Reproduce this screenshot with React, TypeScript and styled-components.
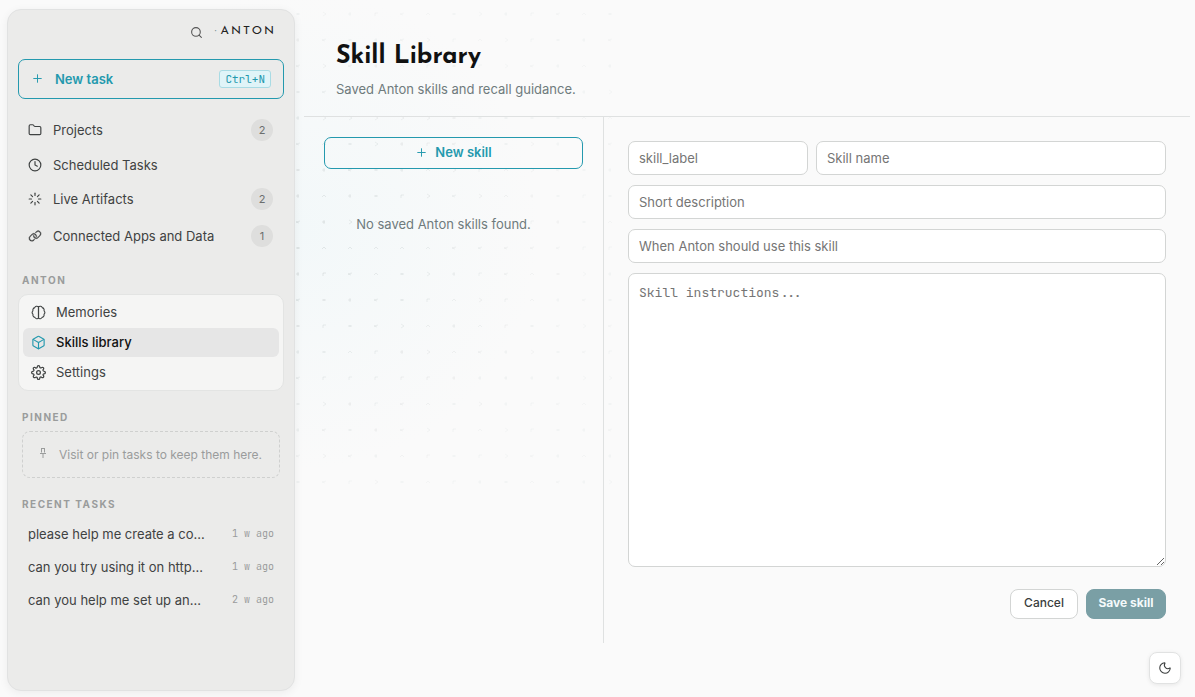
import React from "react";
import styled, { createGlobalStyle, css } from "styled-components";
import { Box, Clock, Folder, Loader, Moon, Plus, Search } from "lucide-react";
import { FiSettings } from "react-icons/fi";
import { PiLink } from "react-icons/pi";

const teal = "#2499ae";
const line = "#dfe1e1";
const sans = `Inter, "Liberation Sans", sans-serif`;
const mono = `"JetBrains Mono", "DejaVu Sans Mono", "Liberation Mono", monospace`;
const display = `"Josefin Sans", Lato, "Liberation Sans", sans-serif`;

const GlobalStyle = createGlobalStyle`
  *, *::before, *::after { box-sizing: border-box; }
  body {
    margin: 0;
    background: #fafafa;
    color: #3a3d3d;
    font-family: ${sans};
    font-size: 13px;
    line-height: 20px;
  }
  button, input, textarea { font: inherit; color: inherit; }
  button { cursor: pointer; }
`;

const Shell = styled.div`
  position: relative;
  display: grid;
  grid-template-columns: 288px minmax(0, 1fr);
  column-gap: 9px;
  min-height: 100vh;
  padding: 0 5px 0 7px;
  background:
    radial-gradient(circle at 300px 230px, rgba(238, 247, 249, 0.6), rgba(250, 250, 250, 0) 240px),
    #fafafa;
`;

const Field = styled.svg`
  position: absolute;
  top: 0;
  left: 0;
  pointer-events: none;
  fill: none;
  stroke: #a3adad;
`;

const Sidebar = styled.aside`
  position: relative;
  display: flex;
  flex-direction: column;
  margin: 9px 0 6px;
  padding: 0 10px;
  border: 1px solid #e1e2e2;
  border-radius: 14px;
  background: #ebebea;
  box-shadow: 0 2px 10px rgba(0, 0, 0, 0.06);
`;

const Brand = styled.div`
  display: flex;
  align-items: center;
  justify-content: flex-end;
  gap: 12px;
  height: 49px;
  padding: 0 8px 8px 0;
`;

const IconButton = styled.button`
  display: grid;
  place-items: center;
  padding: 4px 0 0;
  border: 0;
  background: none;
  color: #555;
`;

const Wordmark = styled.span`
  display: flex;
  gap: 4px;
  font: 400 12px/16px ${display};
  letter-spacing: 2px;
  color: #222;
`;

const Dot = styled.span`
  letter-spacing: 0;
  color: #6f8a90;
`;

const outline = css`
  border: 1px solid ${teal};
  border-radius: 7px;
  background: transparent;
  color: ${teal};
  font-weight: 600;
`;

const NewTask = styled.button`
  ${outline}
  display: flex;
  align-items: center;
  gap: 11px;
  height: 40px;
  padding: 0 12px 1px;
`;

const Kbd = styled.kbd`
  margin-left: auto;
  padding: 0 5px;
  border: 1px solid #a9dbe4;
  border-radius: 3px;
  background: #e0f4f8;
  font: 400 11px/16px ${mono};
`;

const Nav = styled.nav`
  display: flex;
  flex-direction: column;
  gap: 1px;
  margin-top: 13px;
`;

const NavItem = styled.a<{ $tall?: boolean }>`
  display: flex;
  align-items: center;
  gap: 11px;
  height: ${(p) => (p.$tall ? 36 : 31)}px;
  padding: 0 11px 0 10px;
  color: #3f4242;
  text-decoration: none;
`;

const Count = styled.span`
  min-width: 22px;
  height: 22px;
  margin-left: auto;
  border-radius: 11px;
  background: #dededd;
  color: #6b6e6e;
  font-size: 11px;
  line-height: 22px;
  text-align: center;
`;

const SectionTitle = styled.h2`
  margin: 0;
  padding: 0 4px;
  color: #9a9c9c;
  font-size: 10px;
  font-weight: 700;
  line-height: 14px;
  letter-spacing: 1.5px;
`;

const Section = styled.section`
  display: flex;
  flex-direction: column;
  gap: 7px;
  margin-top: 19px;
`;

const Card = styled.div`
  display: flex;
  flex-direction: column;
  gap: 1px;
  padding: 3px 4px;
  border: 1px solid #e3e4e3;
  border-radius: 10px;
  background: #f5f5f4;
`;

const CardItem = styled.a<{ $active?: boolean }>`
  display: flex;
  align-items: center;
  gap: 10px;
  height: 29px;
  padding: 0 8px 1px;
  border-radius: 6px;
  background: ${(p) => (p.$active ? "#e6e6e6" : "transparent")};
  color: ${(p) => (p.$active ? "#111" : "#3f4242")};
  font-weight: ${(p) => (p.$active ? 500 : 400)};
  text-decoration: none;
  svg { color: ${(p) => (p.$active ? teal : "#3f4242")}; }
`;

const Pinned = styled.p`
  display: flex;
  align-items: center;
  gap: 11px;
  height: 47px;
  margin: 0 4px;
  padding: 0 15px;
  border: 1px dashed #cfd0cf;
  border-radius: 8px;
  color: #9a9c9c;
  font-size: 12px;
`;

const Recent = styled.ul`
  display: grid;
  gap: 1px;
  margin: 0;
  padding: 0;
  list-style: none;
`;

const RecentItem = styled.a`
  display: flex;
  align-items: center;
  justify-content: space-between;
  height: 32px;
  padding: 0 10px;
  color: #3f4242;
  text-decoration: none;
`;

const TaskName = styled.span`
  width: 178px;
  overflow: hidden;
  text-overflow: ellipsis;
  white-space: nowrap;
`;

const Time = styled.time`
  color: #9a9c9c;
  font: 400 10px/16px ${mono};
`;

const Main = styled.main`
  position: relative;
  min-width: 0;
`;

const Header = styled.header`
  height: 117px;
  padding: 39px 32px 0;
  border-bottom: 1px solid ${line};
`;

const Title = styled.h1`
  margin: 0 0 4px;
  color: #111;
  font: 700 25px/36px ${display};
`;

const Subtitle = styled.p`
  margin: 0;
  color: #6f7b7d;
`;

const Columns = styled.div`
  display: grid;
  grid-template-columns: 300px minmax(0, 1fr);
`;

const List = styled.section`
  padding: 20px;
  border-right: 1px solid ${line};
`;

const NewSkill = styled.button`
  ${outline}
  display: flex;
  align-items: center;
  justify-content: center;
  gap: 7px;
  width: 100%;
  height: 32px;
  padding: 0 0 2px;
`;

const Empty = styled.p`
  margin: 0;
  padding: 45px 20px 0 0;
  color: #6f7b7d;
  text-align: center;
`;

const Form = styled.form`
  display: flex;
  flex-direction: column;
  gap: 10px;
  padding: 24px;
`;

const Pair = styled.div`
  display: grid;
  grid-template-columns: 180px minmax(0, 1fr);
  gap: 8px;
`;

const control = css`
  width: 100%;
  border: 1px solid #d3d5d4;
  border-radius: 7px;
  background: #fff;
  outline: none;
  &::placeholder { color: #757575; }
`;

const Input = styled.input`
  ${control}
  height: 34px;
  padding: 0 10px;
`;

const TextArea = styled.textarea`
  ${control}
  display: block;
  height: 294px;
  padding: 9px 10px;
  font: 400 13px/20px ${mono};
  resize: vertical;
`;

const Actions = styled.div`
  display: flex;
  justify-content: flex-end;
  gap: 8px;
  margin-top: 12px;
`;

const Button = styled.button<{ $primary?: boolean }>`
  min-width: ${(p) => (p.$primary ? 80 : 68)}px;
  height: 30px;
  padding: 0 11px 2px;
  border: 1px solid ${(p) => (p.$primary ? "#7a9fa5" : "#d3d5d4")};
  border-radius: 8px;
  background: ${(p) => (p.$primary ? "#7a9fa5" : "#fff")};
  color: ${(p) => (p.$primary ? "#f4fafb" : "#3a3d3d")};
  font-size: 12px;
  font-weight: ${(p) => (p.$primary ? 700 : 500)};
`;

const ThemeToggle = styled.button`
  position: fixed;
  right: 14px;
  bottom: 13px;
  display: grid;
  place-items: center;
  width: 32px;
  height: 32px;
  padding: 0;
  border: 1px solid #e1e2e2;
  border-radius: 8px;
  background: #fff;
  box-shadow: 0 1px 4px rgba(0, 0, 0, 0.08);
`;

const Brain = () => (
  <svg width="15" height="15" viewBox="0 0 16 16" fill="none" stroke="currentColor" strokeWidth="1.2" strokeLinejoin="round" aria-hidden="true">
    <path d="M8 1.9C6.6.8 4.6 1.3 4 2.8 2.3 3.3 1.6 4.9 2.1 6.3.9 7.2.9 9 2.1 9.8 1.7 11.5 2.6 13 4.2 13.2 4.9 14.8 6.9 15.2 8 14.1Z" />
    <path d="M8 1.9c1.4-1.1 3.4-.6 4 .9 1.7.5 2.4 2.1 1.9 3.5 1.2.9 1.2 2.7 0 3.5.4 1.7-.5 3.2-2.1 3.4-.7 1.6-2.7 2-3.8.9Z" />
  </svg>
);

const Pin = () => (
  <svg width="10" height="18" viewBox="0 0 10 18" fill="none" stroke="currentColor" aria-hidden="true">
    <path d="M3 2.5h4M3.5 2.5v4M6.5 2.5v4M2 7.5h6M5 8v4" />
  </svg>
);

const marks = ["M-2 0h4M0-1v2", "M-1-2l3 2-3 2", "M0-2v4M-2 0h3", "M-1 2v-3h3", "M2-1l-4 1 3 1", "M-2 1l2-2 2 2"];
const columns = Array.from({ length: 13 }, (_, i) => i);
const rows = Array.from({ length: 19 }, (_, i) => i);

const Glyphs = () => (
  <Field width="640" height="500" aria-hidden="true">
    {rows.flatMap((r) =>
      columns.map((c) => {
        const fade = 1 - Math.hypot(c / 15, (r - 9) / 14);
        return (
          <path
            key={`${r}-${c}`}
            d={marks[(r * 2 + c + ((r * c) % 5)) % marks.length]}
            transform={`translate(${298 + c * 26} ${14 + r * 26})`}
            opacity={Math.max(0.08, fade * 0.26)}
          />
        );
      }),
    )}
  </Field>
);

const nav = [
  { icon: <Folder size={14} strokeWidth={2} />, label: "Projects", count: 2 },
  { icon: <Clock size={14} strokeWidth={2} />, label: "Scheduled Tasks" },
  { icon: <Loader size={14} strokeWidth={2} />, label: "Live Artifacts", count: 2 },
  { icon: <PiLink size={14} strokeWidth={6} />, label: "Connected Apps and Data", count: 1 },
];

const recent = [
  ["please help me create a co...", "1 w ago"],
  ["can you try using it on http...", "1 w ago"],
  ["can you help me set up an...", "2 w ago"],
];

export default function App() {
  return (
    <>
      <GlobalStyle />
      <Shell>
        <Glyphs />
        <Sidebar>
          <Brand>
            <IconButton aria-label="Search"><Search size={13} strokeWidth={2} /></IconButton>
            <Wordmark><Dot>·</Dot>ANTON</Wordmark>
          </Brand>
          <NewTask>
            <Plus size={13} strokeWidth={1.8} />
            New task
            <Kbd>Ctrl+N</Kbd>
          </NewTask>
          <Nav>
            {nav.map(({ icon, label, count }) => (
              <NavItem href="#" key={label} $tall={count !== undefined}>
                {icon}
                {label}
                {count !== undefined && <Count>{count}</Count>}
              </NavItem>
            ))}
          </Nav>
          <Section>
            <SectionTitle>ANTON</SectionTitle>
            <Card>
              <CardItem href="#"><Brain />Memories</CardItem>
              <CardItem href="#" $active><Box size={15} strokeWidth={1.8} />Skills library</CardItem>
              <CardItem href="#"><FiSettings size={15} />Settings</CardItem>
            </Card>
          </Section>
          <Section>
            <SectionTitle>PINNED</SectionTitle>
            <Pinned><Pin />Visit or pin tasks to keep them here.</Pinned>
          </Section>
          <Section>
            <SectionTitle>RECENT TASKS</SectionTitle>
            <Recent>
              {recent.map(([name, time]) => (
                <li key={name}>
                  <RecentItem href="#"><TaskName>{name}</TaskName><Time>{time}</Time></RecentItem>
                </li>
              ))}
            </Recent>
          </Section>
        </Sidebar>
        <Main>
          <Header>
            <Title>Skill Library</Title>
            <Subtitle>Saved Anton skills and recall guidance.</Subtitle>
          </Header>
          <Columns>
            <List>
              <NewSkill><Plus size={13} strokeWidth={1.8} />New skill</NewSkill>
              <Empty>No saved Anton skills found.</Empty>
            </List>
            <Form onSubmit={(e) => e.preventDefault()}>
              <Pair>
                <Input aria-label="Skill label" placeholder="skill_label" />
                <Input aria-label="Skill name" placeholder="Skill name" />
              </Pair>
              <Input aria-label="Short description" placeholder="Short description" />
              <Input aria-label="When to use" placeholder="When Anton should use this skill" />
              <TextArea aria-label="Skill instructions" placeholder="Skill instructions..." />
              <Actions>
                <Button type="button">Cancel</Button>
                <Button type="submit" $primary>Save skill</Button>
              </Actions>
            </Form>
          </Columns>
        </Main>
        <ThemeToggle aria-label="Dark theme"><Moon size={14} strokeWidth={1.8} /></ThemeToggle>
      </Shell>
    </>
  );
}
